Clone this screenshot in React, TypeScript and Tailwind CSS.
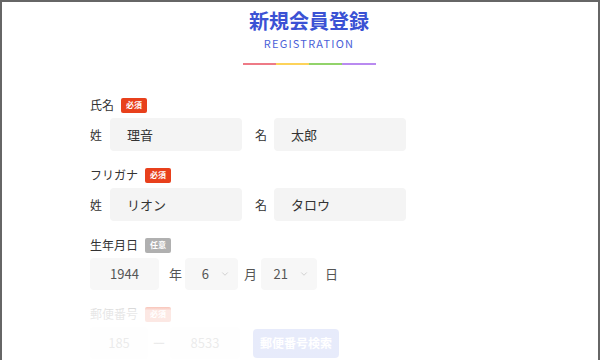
import { ChevronDown } from "lucide-react";

const FONT = { fontFamily: '"Noto Sans CJK JP", "Noto Sans", sans-serif' };

const Badge = ({ text, optional }: { text: string; optional?: boolean }) => (
  <span
    className={`flex h-[15px] w-[26px] items-center justify-center rounded-[2px] text-[8px] font-bold leading-none text-white ${
      optional ? "bg-[#b0b0b0]" : "bg-[#e8401c]"
    }`}
  >
    {text}
  </span>
);

const FieldLabel = ({ text, badge, optional }: { text: string; badge: string; optional?: boolean }) => (
  <div className="flex h-[16px] items-center gap-[7px]">
    <span className="text-[12px] leading-none text-[#333]">{text}</span>
    <Badge text={badge} optional={optional} />
  </div>
);

const NameRow = ({ sei, mei }: { sei: string; mei: string }) => (
  <div className="mt-[5px] flex items-center">
    <span className="w-[20px] text-[12px] text-[#333]">姓</span>
    <div className="flex h-[33px] w-[132px] items-center rounded-[4px] bg-[#f4f4f4] pl-[17px] text-[13px] text-[#333]">
      {sei}
    </div>
    <span className="ml-[13px] w-[19px] text-[12px] text-[#333]">名</span>
    <div className="flex h-[33px] w-[132px] items-center rounded-[4px] bg-[#f4f4f4] pl-[17px] text-[13px] text-[#333]">
      {mei}
    </div>
  </div>
);

const Select = ({ value, width }: { value: string; width: string }) => (
  <div className={`flex h-[32px] ${width} items-center justify-end gap-[11px] rounded-[4px] bg-[#f7f7f7] pr-[8px] text-[13px] text-[#555]`}>
    <span>{value}</span>
    <ChevronDown size={10} strokeWidth={1.4} className="text-[#b5b5b5]" />
  </div>
);

export default function App() {
  return (
    <div
      className="relative h-[360px] w-[600px] overflow-hidden border-2 border-b-0 border-[#666] bg-white"
      style={FONT}
    >
      <div className="flex flex-col items-center pl-[18px] pt-[4px]">
        <h1 className="text-[20px] font-bold leading-[30px] text-[#3b52d4]">新規会員登録</h1>
        <p className="text-[11px] leading-[14px] tracking-[1.2px] text-[#4a5fd8]">REGISTRATION</p>
        <div className="mt-[13px] flex h-[2px] w-[133px]">
          <div className="flex-1 bg-[#ee7a86]" />
          <div className="flex-1 bg-[#fdd35a]" />
          <div className="flex-1 bg-[#92d36a]" />
          <div className="flex-1 bg-[#b98af0]" />
        </div>
      </div>

      <div className="mt-[32px] pl-[88px]">
        <FieldLabel text="氏名" badge="必須" />
        <NameRow sei="理音" mei="太郎" />

        <div className="mt-[16px]">
          <FieldLabel text="フリガナ" badge="必須" />
          <NameRow sei="リオン" mei="タロウ" />
        </div>

        <div className="mt-[16px]">
          <FieldLabel text="生年月日" badge="任意" optional />
          <div className="mt-[5px] flex items-center text-[13px] text-[#555]">
            <div className="flex h-[32px] w-[69px] items-center justify-center rounded-[4px] bg-[#f7f7f7]">1944</div>
            <span className="ml-[10px] w-[16px]">年</span>
            <Select value="6" width="w-[53px]" />
            <span className="ml-[6px] w-[17px]">月</span>
            <Select value="21" width="w-[56px]" />
            <span className="ml-[8px]">日</span>
          </div>
        </div>

        <div className="mt-[16px]">
          <FieldLabel text="郵便番号" badge="必須" />
          <div className="mt-[5px] flex items-center text-[13px] text-[#555]">
            <div className="flex h-[32px] w-[58px] items-center justify-center rounded-[4px] bg-[#f7f7f7]">185</div>
            <span className="w-[22px] text-center">ー</span>
            <div className="flex h-[32px] w-[70px] items-center justify-center rounded-[4px] bg-[#f7f7f7]">8533</div>
            <div className="ml-[13px] flex h-[29px] w-[86px] items-center justify-center rounded-[4px] bg-[#3b5bdb] text-[12px] font-bold text-white">
              郵便番号検索
            </div>
          </div>
        </div>
      </div>

      <div className="pointer-events-none absolute inset-x-0 bottom-0 top-[292px] bg-linear-to-b from-white/0 from-0% to-white/88 to-25%" />
    </div>
  );
}
